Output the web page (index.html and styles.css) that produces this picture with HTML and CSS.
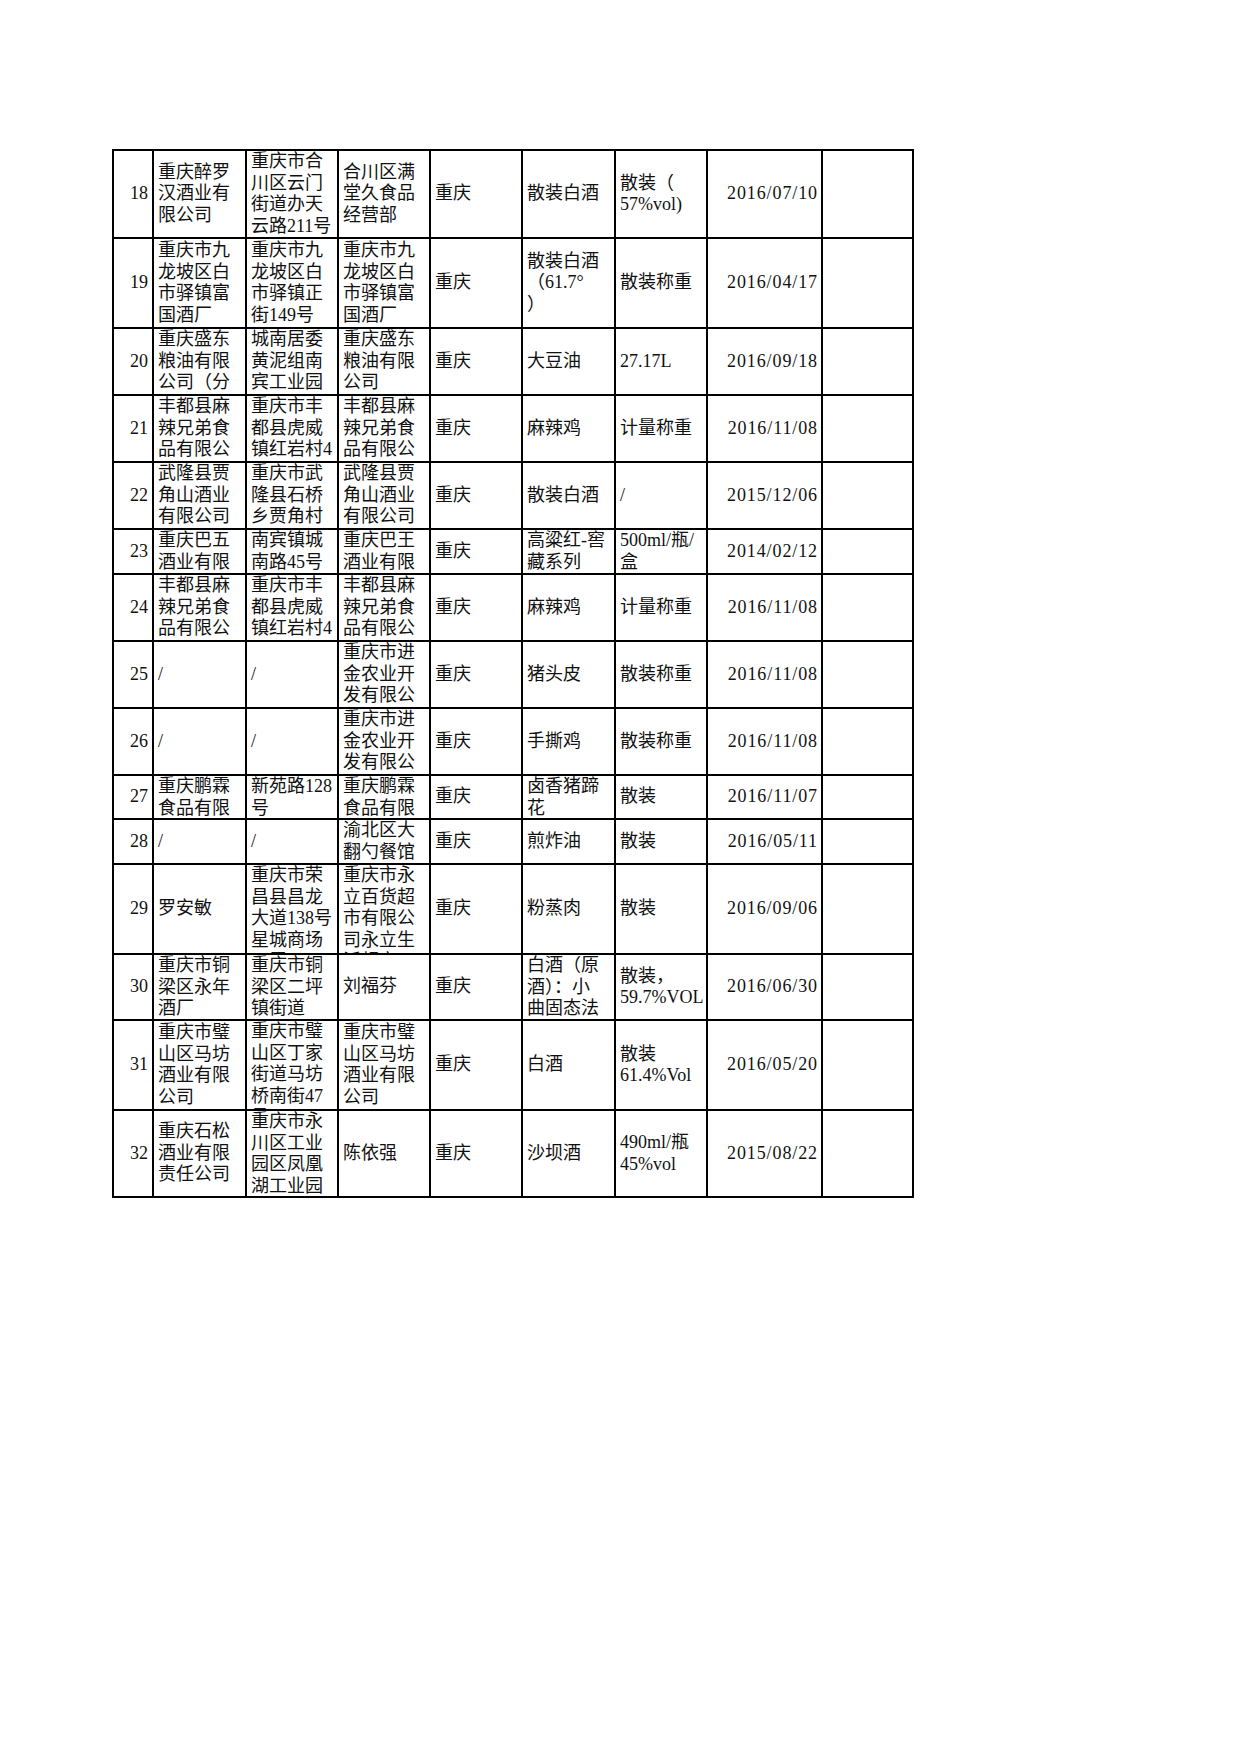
FILE: index.html
```html
<!DOCTYPE html>
<html lang="zh-CN">
<head>
<meta charset="utf-8">
<title>抽检信息</title>
<link rel="stylesheet" href="styles.css">
</head>
<body>
<div class="sheet">
  <!-- 18 -->
  <div class="c n"><span>18</span></div>
  <div class="c"><span>重庆醉罗<br>汉酒业有<br>限公司</span></div>
  <div class="c"><span>重庆市合<br>川区云门<br>街道办天<br>云路211号</span></div>
  <div class="c"><span>合川区满<br>堂久食品<br>经营部</span></div>
  <div class="c"><span>重庆</span></div>
  <div class="c"><span>散装白酒</span></div>
  <div class="c"><span>散装（<br>57%vol)</span></div>
  <div class="c d"><span>2016/07/10</span></div>
  <div class="c"></div>
  <!-- 19 -->
  <div class="c n"><span>19</span></div>
  <div class="c"><span>重庆市九<br>龙坡区白<br>市驿镇富<br>国酒厂</span></div>
  <div class="c"><span>重庆市九<br>龙坡区白<br>市驿镇正<br>街149号</span></div>
  <div class="c"><span>重庆市九<br>龙坡区白<br>市驿镇富<br>国酒厂</span></div>
  <div class="c"><span>重庆</span></div>
  <div class="c"><span>散装白酒<br>（61.7°<br>）</span></div>
  <div class="c"><span>散装称重</span></div>
  <div class="c d"><span>2016/04/17</span></div>
  <div class="c"></div>
  <!-- 20 -->
  <div class="c n"><span>20</span></div>
  <div class="c"><span>重庆盛东<br>粮油有限<br>公司（分<br>公司）</span></div>
  <div class="c"><span>城南居委<br>黄泥组南<br>宾工业园<br>区</span></div>
  <div class="c"><span>重庆盛东<br>粮油有限<br>公司</span></div>
  <div class="c"><span>重庆</span></div>
  <div class="c"><span>大豆油</span></div>
  <div class="c"><span>27.17L</span></div>
  <div class="c d"><span>2016/09/18</span></div>
  <div class="c"></div>
  <!-- 21 -->
  <div class="c n"><span>21</span></div>
  <div class="c"><span>丰都县麻<br>辣兄弟食<br>品有限公<br>司</span></div>
  <div class="c"><span>重庆市丰<br>都县虎威<br>镇红岩村4<br>组</span></div>
  <div class="c"><span>丰都县麻<br>辣兄弟食<br>品有限公<br>司</span></div>
  <div class="c"><span>重庆</span></div>
  <div class="c"><span>麻辣鸡</span></div>
  <div class="c"><span>计量称重</span></div>
  <div class="c d"><span>2016/11/08</span></div>
  <div class="c"></div>
  <!-- 22 -->
  <div class="c n"><span>22</span></div>
  <div class="c"><span>武隆县贾<br>角山酒业<br>有限公司</span></div>
  <div class="c"><span>重庆市武<br>隆县石桥<br>乡贾角村</span></div>
  <div class="c"><span>武隆县贾<br>角山酒业<br>有限公司</span></div>
  <div class="c"><span>重庆</span></div>
  <div class="c"><span>散装白酒</span></div>
  <div class="c"><span>/</span></div>
  <div class="c d"><span>2015/12/06</span></div>
  <div class="c"></div>
  <!-- 23 -->
  <div class="c n"><span>23</span></div>
  <div class="c"><span>重庆巴五<br>酒业有限<br>公司</span></div>
  <div class="c"><span>南宾镇城<br>南路45号</span></div>
  <div class="c"><span>重庆巴王<br>酒业有限<br>公司</span></div>
  <div class="c"><span>重庆</span></div>
  <div class="c"><span>高粱红-窖<br>藏系列</span></div>
  <div class="c"><span>500ml/瓶/<br>盒</span></div>
  <div class="c d"><span>2014/02/12</span></div>
  <div class="c"></div>
  <!-- 24 -->
  <div class="c n"><span>24</span></div>
  <div class="c"><span>丰都县麻<br>辣兄弟食<br>品有限公<br>司</span></div>
  <div class="c"><span>重庆市丰<br>都县虎威<br>镇红岩村4<br>组</span></div>
  <div class="c"><span>丰都县麻<br>辣兄弟食<br>品有限公<br>司</span></div>
  <div class="c"><span>重庆</span></div>
  <div class="c"><span>麻辣鸡</span></div>
  <div class="c"><span>计量称重</span></div>
  <div class="c d"><span>2016/11/08</span></div>
  <div class="c"></div>
  <!-- 25 -->
  <div class="c n"><span>25</span></div>
  <div class="c"><span>/</span></div>
  <div class="c"><span>/</span></div>
  <div class="c"><span>重庆市进<br>金农业开<br>发有限公<br>司</span></div>
  <div class="c"><span>重庆</span></div>
  <div class="c"><span>猪头皮</span></div>
  <div class="c"><span>散装称重</span></div>
  <div class="c d"><span>2016/11/08</span></div>
  <div class="c"></div>
  <!-- 26 -->
  <div class="c n"><span>26</span></div>
  <div class="c"><span>/</span></div>
  <div class="c"><span>/</span></div>
  <div class="c"><span>重庆市进<br>金农业开<br>发有限公<br>司</span></div>
  <div class="c"><span>重庆</span></div>
  <div class="c"><span>手撕鸡</span></div>
  <div class="c"><span>散装称重</span></div>
  <div class="c d"><span>2016/11/08</span></div>
  <div class="c"></div>
  <!-- 27 -->
  <div class="c n"><span>27</span></div>
  <div class="c"><span>重庆鹏霖<br>食品有限<br>公司</span></div>
  <div class="c"><span>新苑路128<br>号</span></div>
  <div class="c"><span>重庆鹏霖<br>食品有限<br>公司</span></div>
  <div class="c"><span>重庆</span></div>
  <div class="c"><span>卤香猪蹄<br>花</span></div>
  <div class="c"><span>散装</span></div>
  <div class="c d"><span>2016/11/07</span></div>
  <div class="c"></div>
  <!-- 28 -->
  <div class="c n"><span>28</span></div>
  <div class="c"><span>/</span></div>
  <div class="c"><span>/</span></div>
  <div class="c"><span>渝北区大<br>翻勺餐馆</span></div>
  <div class="c"><span>重庆</span></div>
  <div class="c"><span>煎炸油</span></div>
  <div class="c"><span>散装</span></div>
  <div class="c d"><span>2016/05/11</span></div>
  <div class="c"></div>
  <!-- 29 -->
  <div class="c n"><span>29</span></div>
  <div class="c"><span>罗安敏</span></div>
  <div class="c"><span>重庆市荣<br>昌县昌龙<br>大道138号<br>星城商场<br>一层</span></div>
  <div class="c"><span>重庆市永<br>立百货超<br>市有限公<br>司永立生<br>活超市</span></div>
  <div class="c"><span>重庆</span></div>
  <div class="c"><span>粉蒸肉</span></div>
  <div class="c"><span>散装</span></div>
  <div class="c d"><span>2016/09/06</span></div>
  <div class="c"></div>
  <!-- 30 -->
  <div class="c n"><span>30</span></div>
  <div class="c"><span>重庆市铜<br>梁区永年<br>酒厂</span></div>
  <div class="c"><span>重庆市铜<br>梁区二坪<br>镇街道</span></div>
  <div class="c"><span>刘福芬</span></div>
  <div class="c"><span>重庆</span></div>
  <div class="c"><span>白酒（原<br>酒）：小<br>曲固态法</span></div>
  <div class="c"><span>散装，<br>59.7%VOL</span></div>
  <div class="c d"><span>2016/06/30</span></div>
  <div class="c"></div>
  <!-- 31 -->
  <div class="c n"><span>31</span></div>
  <div class="c"><span>重庆市璧<br>山区马坊<br>酒业有限<br>公司</span></div>
  <div class="c"><span>重庆市璧<br>山区丁家<br>街道马坊<br>桥南街47<br>号</span></div>
  <div class="c"><span>重庆市璧<br>山区马坊<br>酒业有限<br>公司</span></div>
  <div class="c"><span>重庆</span></div>
  <div class="c"><span>白酒</span></div>
  <div class="c"><span>散装<br>61.4%Vol</span></div>
  <div class="c d"><span>2016/05/20</span></div>
  <div class="c"></div>
  <!-- 32 -->
  <div class="c n"><span>32</span></div>
  <div class="c"><span>重庆石松<br>酒业有限<br>责任公司</span></div>
  <div class="c"><span>重庆市永<br>川区工业<br>园区凤凰<br>湖工业园</span></div>
  <div class="c"><span>陈依强</span></div>
  <div class="c"><span>重庆</span></div>
  <div class="c"><span>沙坝酒</span></div>
  <div class="c"><span>490ml/瓶<br>45%vol</span></div>
  <div class="c d"><span>2015/08/22</span></div>
  <div class="c"></div>
</div>
</body>
</html>
```
FILE: styles.css
```css
html, body {
  margin: 0;
  background: #ffffff;
}

.sheet {
  display: grid;
  grid-template-columns: 38px 91px 90px 90px 90px 91px 90px 113px 89px;
  grid-template-rows: 86px 88px 65px 65px 65px 43px 65px 65px 65px 42px 43px 88px 64px 88px 85px;
  gap: 2px;
  padding: 2px;
  background: #000000;
  width: max-content;
  margin: 149px 0 0 112px;
}

.c {
  background: #ffffff;
  overflow: hidden;
  display: flex;
  align-items: safe center;
  padding: 0 3px 0 4px;
  font-family: "Liberation Serif", "Noto Sans CJK SC", serif;
  font-size: 18px;
  line-height: 21.5px;
  color: #111111;
  white-space: nowrap;
}

.n {
  justify-content: flex-end;
  padding-right: 4px;
}

.d {
  justify-content: flex-end;
  letter-spacing: 0.9px;
  padding-right: 3px;
}
```
